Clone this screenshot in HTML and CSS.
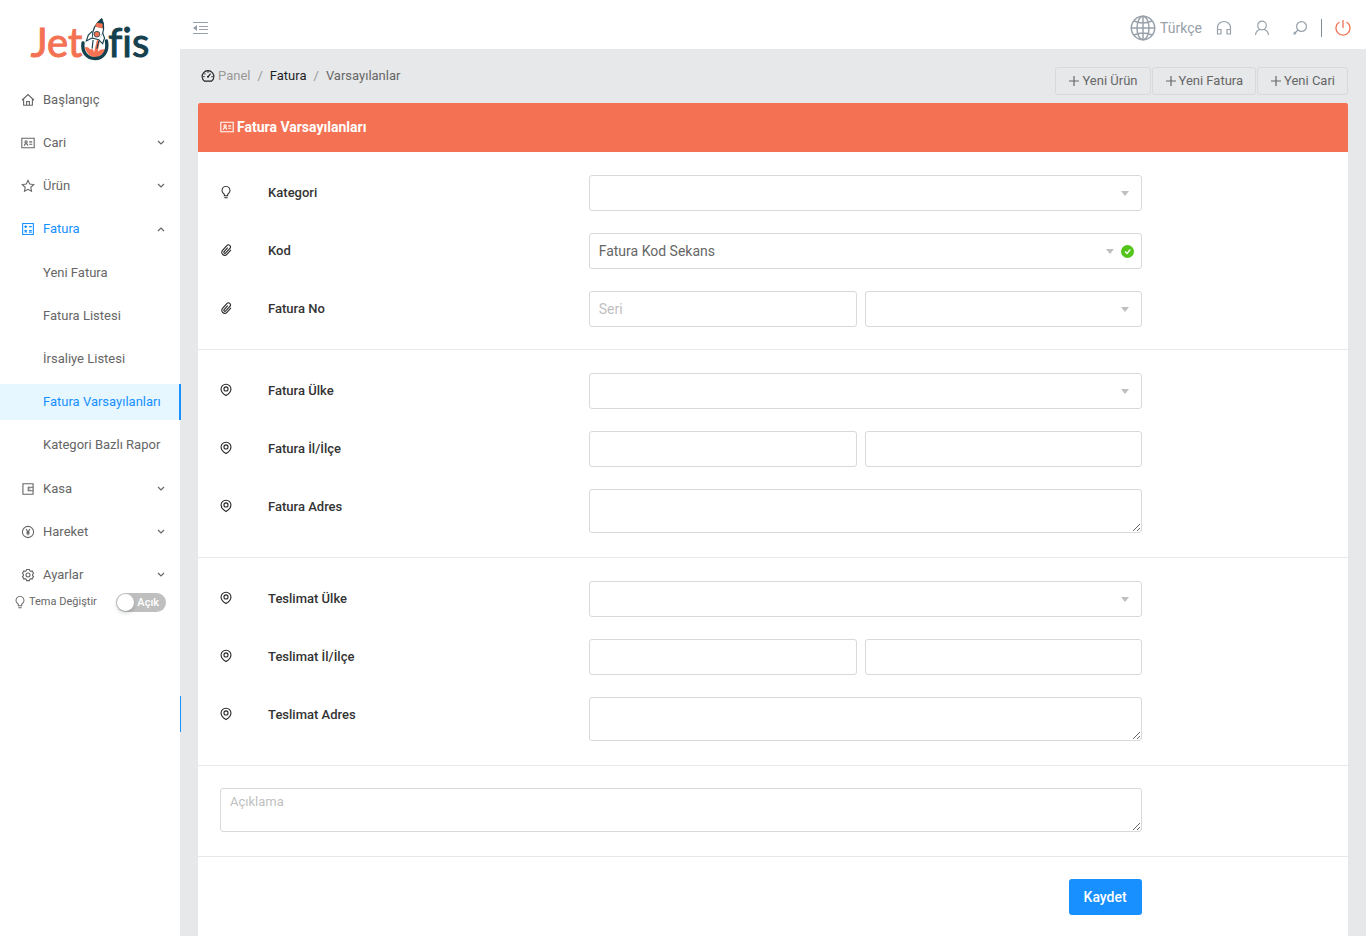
FILE: index.html
```html
<!DOCTYPE html>
<html lang="tr">
<head>
<meta charset="utf-8">
<title>Fatura Varsayılanları</title>
<link rel="stylesheet" href="styles.css">
</head>
<body>
<svg class="sprite" aria-hidden="true">
  <symbol id="home" viewBox="0 0 1024 1024"><path class="line" d="M70 530 512 110 954 530M190 430V900H834V430M410 900V620H614V900"/></symbol>
  <symbol id="idcard" viewBox="0 0 1024 1024"><path class="line" d="M60 170H964V854H60ZM240 710Q260 560 370 560T500 710M600 430H820M600 600H820"/><circle class="line" cx="370" cy="430" r="80"/></symbol>
  <symbol id="star" viewBox="0 0 1024 1024"><path class="line" d="M512 100 638 370 930 408 716 608 770 900 512 758 254 900 308 608 94 408 386 370Z"/></symbol>
  <symbol id="calc" viewBox="0 0 1024 1024"><path class="line" d="M120 110H904V914H120ZM240 340H450M345 240V440M580 340H790M260 600 430 760M430 600 260 760M580 620H790M580 740H790"/></symbol>
  <symbol id="wallet" viewBox="0 0 1024 1024"><path class="line" d="M140 130H884V894H140ZM884 380H530V640H884"/><circle cx="650" cy="510" r="45"/></symbol>
  <symbol id="money" viewBox="0 0 1024 1024"><circle class="line" cx="512" cy="512" r="412"/><path class="line" d="M370 290 512 520 654 290M512 520V750M400 540H624M400 640H624"/></symbol>
  <symbol id="gear" viewBox="0 0 1024 1024"><path class="line" d="M385 197 410 104 614 104 639 197 721 245 814 220 916 396 848 465 848 560 916 628 814 804 721 780 639 827 614 920 410 920 385 827 303 780 210 804 108 628 176 560 176 465 108 396 210 220 303 245Z"/><circle class="line" cx="512" cy="512" r="145"/></symbol>
  <symbol id="bulb" viewBox="0 0 1024 1024"><path d="M632 888H392c-4.400 0-8 3.600-8 8v32c0 17.700 14.300 32 32 32h192c17.700 0 32-14.300 32-32v-32c0-4.400-3.600-8-8-8zM512 64c-181.100 0-328 146.900-328 328 0 121.400 66 227.400 164 284.100V792c0 17.700 14.300 32 32 32h264c17.700 0 32-14.300 32-32V676.100c98-56.700 164-162.700 164-284.100 0-181.100-146.900-328-328-328zm127.900 549.800L604 634.600V752H420V634.600l-35.900-20.800C305.400 568.300 256 484.500 256 392c0-141.400 114.600-256 256-256s256 114.600 256 256c0 92.500-49.400 176.300-128.100 221.800z"/></symbol>
  <symbol id="pin" viewBox="0 0 1024 1024"><path class="line" d="M512 918C440 875 150 690 150 431A362 340 0 0 1 874 431C874 690 584 875 512 918Z"/><circle class="line" cx="512" cy="431" r="150"/></symbol>
  <symbol id="clip" viewBox="0 0 1024 1024"><path class="line" transform="rotate(42 512 512)" d="M770 260V700A215 215 0 0 1 340 700V230A150 150 0 0 1 640 230V690A75 75 0 0 1 490 690V300"/></symbol>
  <symbol id="dash" viewBox="0 0 1024 1024"><path class="line" d="M250 890A430 430 0 1 1 774 890ZM512 190V280M260 330 320 385M170 560H260M764 560H854M512 570 700 340"/><circle cx="512" cy="570" r="75"/></symbol>
  <symbol id="down" viewBox="0 0 10 10"><path class="thin" d="M2 3 5 6 8 3"/></symbol>
  <symbol id="up" viewBox="0 0 10 10"><path class="thin" d="M2 7 5 4 8 7"/></symbol>
  <symbol id="plus" viewBox="0 0 12 12"><path class="thin" d="M6 1V11M1 6H11"/></symbol>
  <symbol id="caret" viewBox="0 0 10 10"><path d="M1 3H9L5 8Z"/></symbol>
</svg>

<div class="app">
  <aside class="sidebar">
    <a class="logo" href="#" aria-label="Jetofis">
      <span class="logo-jet">Jet</span>
      <svg class="rocket" viewBox="0 0 30 46">
        <path d="M4 32Q8 30 10 34Q13 32 14 37L17 24 20 25 18 36Q21 33 26 34Q22 42 15 42T4 32Z" fill="#f47253"/>
        <path d="M2.500 27C1 37 7 43.500 15 43.500S29 37 27 25" fill="none" stroke="#15404d" stroke-width="3.500" stroke-linecap="round"/>
        <path d="M22 2Q12 9 12 22L20 24Q27 12 22 2Z" fill="#fff" stroke="#15404d" stroke-width="1.200"/>
        <path d="M22 1Q17 5 15 10L24 12Q25 6 22 1Z" fill="#15404d"/>
        <path d="M17 6 23 7 23 12 15 10Z" fill="#f47253"/>
        <path d="M12 15 8 19 6 25 12 22M23 17 25 22 23 28 19 24" fill="#fff" stroke="#15404d" stroke-width="1.200"/>
        <circle cx="17" cy="18" r="3" fill="#f47253" stroke="#15404d" stroke-width=".800"/>
        <path d="M13 24 12 33M19 25 17 33" stroke="#15404d" stroke-width="1.200"/>
      </svg>
      <span class="logo-fis">fis</span>
    </a>
    <nav>
      <ul class="menu">
        <li><a class="item" href="#"><svg class="icon"><use href="#home"/></svg><span>Başlangıç</span></a></li>
        <li><a class="item" href="#"><svg class="icon"><use href="#idcard"/></svg><span>Cari</span><svg class="arrow"><use href="#down"/></svg></a></li>
        <li><a class="item" href="#"><svg class="icon"><use href="#star"/></svg><span>Ürün</span><svg class="arrow"><use href="#down"/></svg></a></li>
        <li><a class="item open" href="#"><svg class="icon"><use href="#calc"/></svg><span>Fatura</span><svg class="arrow"><use href="#up"/></svg></a>
          <ul class="submenu">
            <li><a class="item" href="#">Yeni Fatura</a></li>
            <li><a class="item" href="#">Fatura Listesi</a></li>
            <li><a class="item" href="#">İrsaliye Listesi</a></li>
            <li><a class="item active" href="#" aria-current="page">Fatura Varsayılanları</a></li>
            <li><a class="item" href="#">Kategori Bazlı Rapor</a></li>
          </ul>
        </li>
        <li><a class="item" href="#"><svg class="icon"><use href="#wallet"/></svg><span>Kasa</span><svg class="arrow"><use href="#down"/></svg></a></li>
        <li><a class="item" href="#"><svg class="icon"><use href="#money"/></svg><span>Hareket</span><svg class="arrow"><use href="#down"/></svg></a></li>
        <li><a class="item" href="#"><svg class="icon"><use href="#gear"/></svg><span>Ayarlar</span><svg class="arrow"><use href="#down"/></svg></a></li>
      </ul>
    </nav>
    <div class="theme">
      <svg class="icon"><use href="#bulb"/></svg>
      <label for="theme">Tema Değiştir</label>
      <span class="switch"><input id="theme" type="checkbox" role="switch"><span class="switch-text">Açık</span></span>
    </div>
  </aside>

  <div class="page">
    <header class="topbar">
      <button class="tool" type="button" aria-label="Menüyü daralt"><svg width="15" height="14" viewBox="0 0 15 14"><path d="M0 1.500H15M6 5.500H15M6 8.500H15M0 12.500H15" stroke="currentColor" fill="none"/><path d="M4 4V10L0 7Z" fill="currentColor"/></svg></button>
      <div class="tools">
        <button class="tool lang" type="button"><svg class="outline" width="26" height="26" viewBox="0 0 26 26" stroke-width="1.500"><circle cx="13" cy="13" r="11.700"/><ellipse cx="13" cy="13" rx="6" ry="11.700"/><path d="M13 1V25M1 13H25M4 6Q13 10 22 6M4 20Q13 16 22 20"/></svg>Türkçe</button>
        <button class="tool" type="button" aria-label="Destek"><svg class="outline" width="16" height="16" viewBox="0 0 16 16" stroke-width="1.200"><path d="M1.500 14V7.500A6.500 6 0 0 1 14.500 7.500V14M1.500 9.500H5V14H1.500ZM14.500 9.500H11V14H14.500Z"/></svg></button>
        <button class="tool" type="button" aria-label="Profil"><svg class="outline" width="16" height="16" viewBox="0 0 16 16" stroke-width="1.200"><circle cx="8" cy="5.500" r="4.300"/><path d="M1.500 15A6.500 6.500 0 0 1 6 9.400M14.500 15A6.500 6.500 0 0 0 10 9.400"/></svg></button>
        <button class="tool" type="button" aria-label="Ara"><svg class="outline" width="16" height="16" viewBox="0 0 16 16" stroke-width="1.200"><circle cx="9.500" cy="6.500" r="4.900"/><path d="M6 10 1.500 14.500M2 12 4 14"/></svg></button>
        <span class="bar"></span>
        <button class="tool power" type="button" aria-label="Çıkış"><svg class="outline" width="16" height="17" viewBox="0 0 16 17" stroke-width="1.300"><path d="M4.500 3A7 7 0 1 0 11.500 3M8 1V9"/></svg></button>
      </div>
    </header>

    <main class="content">
      <div class="heading">
        <nav class="crumbs" aria-label="Konum">
          <svg class="icon dark"><use href="#dash"/></svg><a href="#">Panel</a><i>/</i><a class="dark" href="#">Fatura</a><i>/</i><span>Varsayılanlar</span>
        </nav>
        <div class="actions">
          <button type="button"><svg><use href="#plus"/></svg>Yeni Ürün</button>
          <button type="button"><svg><use href="#plus"/></svg>Yeni Fatura</button>
          <button type="button"><svg><use href="#plus"/></svg>Yeni Cari</button>
        </div>
      </div>

      <form class="card">
        <h1 class="card-title"><svg><use href="#idcard"/></svg>Fatura Varsayılanları</h1>
        <section class="section">
          <div class="row"><svg class="icon"><use href="#bulb"/></svg><label for="kategori">Kategori</label>
            <div class="select"><select id="kategori"><option></option></select><svg class="caret"><use href="#caret"/></svg></div></div>
          <div class="row"><svg class="icon"><use href="#clip"/></svg><label for="kod">Kod</label>
            <div class="select valid"><select id="kod"><option>Fatura Kod Sekans</option></select><svg class="caret"><use href="#caret"/></svg><svg class="check" viewBox="0 0 13 13"><circle cx="6.500" cy="6.500" r="6.500" fill="#52c41a"/><path d="M4 6.500 6 8.500 9.300 4.500" fill="none" stroke="#fff" stroke-width="1.200"/></svg></div></div>
          <div class="row"><svg class="icon"><use href="#clip"/></svg><label for="seri">Fatura No</label>
            <div class="pair"><input id="seri" type="text" placeholder="Seri"><div class="select"><select aria-label="Fatura numarası"><option></option></select><svg class="caret"><use href="#caret"/></svg></div></div></div>
        </section>
        <section class="section">
          <div class="row"><svg class="icon"><use href="#pin"/></svg><label for="fulke">Fatura Ülke</label>
            <div class="select"><select id="fulke"><option></option></select><svg class="caret"><use href="#caret"/></svg></div></div>
          <div class="row"><svg class="icon"><use href="#pin"/></svg><label for="fil">Fatura İl/İlçe</label>
            <div class="pair"><input id="fil" type="text"><input type="text" aria-label="Fatura ilçe"></div></div>
          <div class="row tall"><svg class="icon"><use href="#pin"/></svg><label for="fadres">Fatura Adres</label><textarea id="fadres"></textarea></div>
        </section>
        <section class="section">
          <div class="row"><svg class="icon"><use href="#pin"/></svg><label for="tulke">Teslimat Ülke</label>
            <div class="select"><select id="tulke"><option></option></select><svg class="caret"><use href="#caret"/></svg></div></div>
          <div class="row"><svg class="icon"><use href="#pin"/></svg><label for="til">Teslimat İl/İlçe</label>
            <div class="pair"><input id="til" type="text"><input type="text" aria-label="Teslimat ilçe"></div></div>
          <div class="row tall"><svg class="icon"><use href="#pin"/></svg><label for="tadres">Teslimat Adres</label><textarea id="tadres"></textarea></div>
        </section>
        <section class="section compact">
          <div class="row tall"><textarea class="wide note" placeholder="Açıklama" aria-label="Açıklama"></textarea></div>
        </section>
        <section class="section compact">
          <div class="row"><div class="wide submit"><button class="save" type="submit">Kaydet</button></div></div>
        </section>
      </form>
    </main>
  </div>
</div>
</body>
</html>
```

FILE: styles.css
```css
* { box-sizing: border-box; }
body { margin: 0; font: 13px/20px Roboto, sans-serif; color: #666; background: #e7e8ea; }
a { color: inherit; text-decoration: none; }
ul { list-style: none; margin: 0; padding: 0; }
button, input, select, textarea { font: inherit; color: inherit; margin: 0; }
.sprite { position: absolute; width: 0; height: 0; }
.line { fill: none; stroke: currentColor; stroke-width: 80; }
.thin { fill: none; stroke: currentColor; stroke-width: 1.2; }
svg { fill: currentColor; flex: none; }
.outline { fill: none; stroke: currentColor; }
.icon { width: 14px; height: 14px; }

.app { display: flex; min-height: 100vh; }
.sidebar { position: relative; flex: none; width: 180px; background: #fff; }
.sidebar::after { content: ""; position: absolute; left: 180px; top: 696px; width: 1px; height: 36px; background: #1890ff; }
.logo { display: flex; justify-content: center; height: 82px; padding-top: 17px; font: 40px/50px Lato, sans-serif; }
.logo-jet { color: #f47253; -webkit-text-stroke: 1px currentColor; }
.logo-fis { color: #15404d; -webkit-text-stroke: 1px currentColor; }
.rocket { width: 30px; height: 44px; margin: 0 -2px; }
.item { display: flex; align-items: center; height: 36px; margin-bottom: 7px; padding: 0 14px 0 21px; }
.item .icon { margin-right: 8px; }
.arrow { width: 10px; height: 10px; margin-left: auto; }
.open { color: #1890ff; }
.open .arrow { color: #666; }
.submenu { padding: 1px 0; }
.submenu .item { padding-left: 43px; padding-right: 0; }
.submenu .active { margin-right: -1px; position: relative; background: #e6f7ff; color: #1890ff; border-right: 2px solid #1890ff; }
.theme { display: flex; align-items: center; margin-top: -8px; padding: 0 14px 0 13px; height: 20px; font-size: 11px; }
.theme .icon { margin-right: 2px; }
.switch { position: relative; display: flex; margin-left: auto; }
.switch input { appearance: none; width: 50px; height: 19px; border-radius: 10px; background: #bfbfbf; }
.switch input::before { content: ""; display: block; width: 17px; height: 17px; margin: 1px; border-radius: 50%; background: #fff; box-shadow: 0 2px 4px rgba(0, 35, 11, .2); }
.switch-text { position: absolute; right: 7px; top: 0; color: #fff; font-weight: 500; pointer-events: none; }

.page { flex: 1; min-width: 0; }
.topbar { display: flex; justify-content: space-between; align-items: center; height: 49px; padding: 6px 15px 0 13px; background: #fff; color: #98a1aa; }
.tool { display: flex; align-items: center; padding: 0; border: 0; background: none; }
.tools { display: flex; align-items: center; gap: 22px; }
.lang { gap: 4px; font-size: 14px; margin-right: -8px; }
.bar { width: 1px; height: 18px; margin: 0 -9px; background: #7f8c99; }
.power { color: #f47253; }

.content { padding: 18px 18px 0; }
.heading { display: flex; justify-content: space-between; align-items: flex-start; margin-bottom: 8px; }
.crumbs { display: flex; align-items: center; padding-left: 3px; height: 18px; }
.crumbs a:first-of-type, .crumbs i { color: #999; }
.crumbs .icon { margin-right: 3px; }
.crumbs i { font-style: normal; margin: 0 7px; }
.crumbs .dark { color: #1f1f1f; }
.actions { display: flex; gap: 1px; }
.actions button { display: flex; align-items: center; gap: 2px; height: 28px; padding: 0 12px; border: 1px solid #d9d9d9; border-radius: 3px; background: transparent; }
.actions svg { width: 12px; height: 12px; }

.card { background: #fff; border-radius: 2px 2px 0 0; }
.card-title { display: flex; align-items: center; gap: 3px; height: 49px; margin: 0; padding: 0 22px 2px; border-radius: 2px 2px 0 0; background: #f47253; color: #fff; font-size: 14px; font-weight: 700; }
.card-title svg { width: 14px; height: 14px; }
.section { display: grid; gap: 22px; padding: 23px 22px 22px; border-bottom: 1px solid #e8e8e8; }
.section:last-child { border-bottom: 0; }
.compact { padding-top: 22px; }
.row { display: grid; grid-template-columns: 1fr 7fr 12fr 4fr; align-items: start; }
.row > * { min-width: 0; }
.row .icon { margin: 10px 0 0 -1px; color: #262626; }
.row label { padding: 8px 2px 6px; font-weight: 500; color: #333; }
.tall { padding-bottom: 2px; }
.wide { grid-column: 1 / 4; }
.row input, .row select, .row textarea { display: block; width: 100%; height: 36px; padding: 0 9px; border: 1px solid #d9d9d9; border-radius: 3px; background: #fff; font-size: 14px; outline: 0; }
.row select { appearance: none; }
.row textarea { height: 44px; padding: 3px 9px; resize: vertical; }
.row .note { font-size: 13px; }
::placeholder { color: #bfbfbf; opacity: 1; }
.pair { display: grid; grid-template-columns: 1fr 1fr; }
.pair > input:first-child { width: calc(100% - 8px); }
.select { position: relative; }
.caret { position: absolute; right: 12px; top: 13px; width: 10px; height: 10px; color: #bfbfbf; pointer-events: none; }
.valid .caret { right: 27px; }
.check { position: absolute; right: 8px; top: 12px; width: 13px; height: 13px; }
.submit { display: flex; justify-content: flex-end; }
.save { height: 36px; padding: 0 15px; border: 0; border-radius: 3px; background: #1890ff; color: #fff; font-size: 14px; font-weight: 500; }
```
